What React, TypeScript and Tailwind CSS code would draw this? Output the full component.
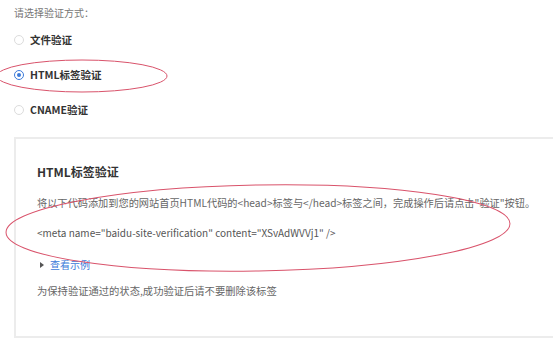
import React from 'react';

const FONT = { fontFamily: '"Microsoft YaHei", "Noto Sans CJK SC", "Liberation Sans", sans-serif' };

const Radio: React.FC<{ checked?: boolean; label: string }> = ({ checked, label }) => (
  <div className="flex items-center h-[35px]">
    <span
      className={`w-[10px] h-[10px] rounded-full border flex items-center justify-center ${
        checked ? 'border-[#3b7ad9]' : 'border-[#dcdcdc]'
      }`}
    >
      {checked && <span className="w-[4px] h-[4px] rounded-full bg-[#3b7ad9]" />}
    </span>
    <span className="ml-[6px] text-[10.5px] font-bold text-[#333]">{label}</span>
  </div>
);

export default function App() {
  return (
    <div className="relative w-[553px] h-[346px] bg-white overflow-hidden" style={FONT}>
      <div className="pl-[14px] pt-[5px]">
        <div className="text-[10px] leading-[16px] text-[#777]">请选择验证方式：</div>
        <div className="mt-[1px]">
          <Radio label="文件验证" />
          <Radio checked label="HTML标签验证" />
          <Radio label="CNAME验证" />
        </div>
      </div>

      <div className="ml-[14px] mt-[10px] w-[545px] h-[201px] border-2 border-[#ececec] pl-[21px] pt-[24px]">
        <div className="text-[12px] leading-[18px] font-bold text-[#333]">HTML标签验证</div>
        <div className="mt-[14px] text-[10.2px] leading-[16px] text-[#666] whitespace-nowrap">
          将以下代码添加到您的网站首页HTML代码的&lt;head&gt;标签与&lt;/head&gt;标签之间，完成操作后请点击"验证"按钮。
        </div>
        <div className="mt-[14px] text-[10px] leading-[16px] text-[#555] whitespace-nowrap">
          &lt;meta name="baidu-site-verification" content="XSvAdWVVj1" /&gt;
        </div>
        <div className="mt-[16px] flex items-center text-[10px] leading-[16px]">
          <span className="ml-[3px] w-0 h-0 border-y-[3px] border-y-transparent border-l-[4px] border-l-[#555]" />
          <span className="ml-[6px] text-[#3b7ad9]">查看示例</span>
        </div>
        <div className="mt-[10px] text-[10.3px] leading-[16px] text-[#666]">
          为保持验证通过的状态,成功验证后请不要删除该标签
        </div>
      </div>

      {/* hand-drawn red annotation ellipses */}
      <svg className="absolute inset-0 pointer-events-none" width="553" height="346">
        <ellipse cx="82" cy="76" rx="85" ry="16" fill="none" stroke="#d9536b" strokeWidth="1" />
        <ellipse
          cx="258"
          cy="228"
          rx="252"
          ry="43"
          fill="none"
          stroke="#d9536b"
          strokeWidth="1"
          transform="rotate(-1 258 228)"
        />
      </svg>
    </div>
  );
}
